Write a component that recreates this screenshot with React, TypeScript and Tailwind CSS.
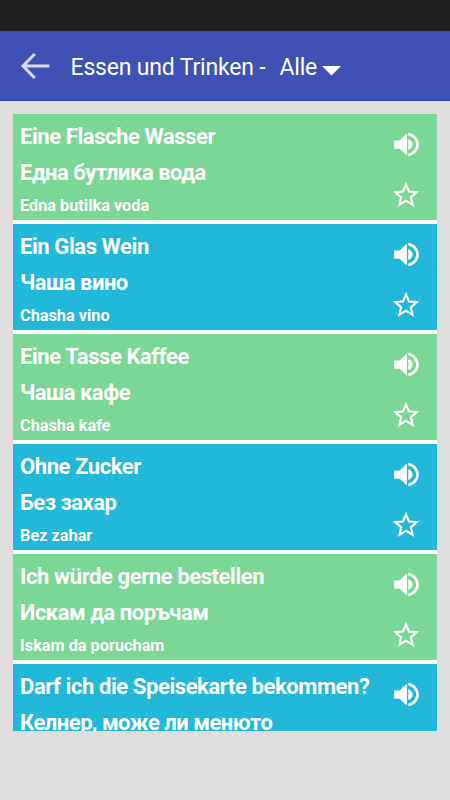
interface Phrase {
  source: string;
  target: string;
  phonetic?: string;
}

const phrases: Phrase[] = [
  { source: "Eine Flasche Wasser", target: "Една бутлика вода", phonetic: "Edna butilka voda" },
  { source: "Ein Glas Wein", target: "Чаша вино", phonetic: "Chasha vino" },
  { source: "Eine Tasse Kaffee", target: "Чаша кафе", phonetic: "Chasha kafe" },
  { source: "Ohne Zucker", target: "Без захар", phonetic: "Bez zahar" },
  { source: "Ich würde gerne bestellen", target: "Искам да поръчам", phonetic: "Iskam da porucham" },
  { source: "Darf ich die Speisekarte bekommen?", target: "Келнер, може ли менюто" },
];

function BackIcon() {
  return (
    <svg className="h-8 w-8" viewBox="0 0 32 32" fill="none" stroke="#d9dcf1" strokeWidth="3">
      <path d="M15.8 4 4 16l11.8 12M4.3 16h26.2" />
    </svg>
  );
}

function SpeakerIcon() {
  return (
    <svg className="h-[33px] w-[33px]" viewBox="0 0 24 24" fill="currentColor">
      <path d="M3 9v6h4l5.3 5V4L7 9H3zm13.5 3c0-1.77-1.4-3.4-3.2-4.03v8.05c1.8-.6 3.2-2.25 3.2-4.02zM13.3 3.4v2.06c3.2.6 5.7 3.37 5.7 6.54s-2.5 5.94-5.7 6.54v2.06c4.4-.7 7.7-4.32 7.7-8.6s-3.3-7.9-7.7-8.6z" />
    </svg>
  );
}

function StarIcon() {
  return (
    <svg className="h-8 w-8" viewBox="0 0 24 24" fill="currentColor">
      <path d="M22 9.24l-7.19-.62L12 2 9.19 8.63 2 9.24l5.46 4.73L5.82 21 12 17.27 18.18 21l-1.63-7.03L22 9.24zM12 15.4l-3.76 2.27 1-4.28-3.32-2.88 4.38-.38L12 6.1l1.71 4.04 4.38.38-3.32 2.88 1 4.28L12 15.4z" />
    </svg>
  );
}

function PhraseCard({ phrase, green }: { phrase: Phrase; green: boolean }) {
  return (
    <div className={`flex h-[106px] shrink-0 text-white ${green ? "bg-[#7ad796]" : "bg-[#22b8da]"}`}>
      <div className="min-w-0 flex-1 whitespace-nowrap pl-[7px] pt-[5px] font-bold">
        <p className="text-[22px] leading-9 tracking-[-0.42px]">{phrase.source}</p>
        <p className="text-[22px] leading-9 tracking-[-0.5px]">{phrase.target}</p>
        {phrase.phonetic && <p className="text-[16.3px] leading-[30px]">{phrase.phonetic}</p>}
      </div>
      <div className="flex w-[62px] shrink-0 flex-col items-center gap-[18px] pt-[14px]">
        <SpeakerIcon />
        <StarIcon />
      </div>
    </div>
  );
}

export default function App() {
  return (
    <div className="flex h-[800px] w-[450px] flex-col overflow-hidden bg-[#dedede] font-['Roboto',sans-serif]">
      {/* Status bar */}
      <div className="h-[31px] shrink-0 bg-[#1f1f1f]" />

      {/* Toolbar */}
      <header className="flex h-[70px] shrink-0 items-center border-b border-[#2c42b4] bg-[#3f51b5] pl-[19px] text-[23px] tracking-[-0.18px] text-white">
        <BackIcon />
        <h1 className="ml-[19.5px] whitespace-pre pt-[6px]">Essen und Trinken -</h1>
        <span className="ml-[14px] pt-[6px]">Alle</span>
        <svg className="ml-[5px] mt-[11px] h-[10px] w-[19px]" viewBox="0 0 19 10" fill="currentColor">
          <path d="M0 0h19L9.5 9.5z" />
        </svg>
      </header>

      {/* Phrase list */}
      <main className="mx-[13px] mt-[13px] flex h-[617px] flex-col gap-1 overflow-hidden bg-white">
        {phrases.map((phrase, i) => (
          <PhraseCard key={phrase.source} phrase={phrase} green={i % 2 === 0} />
        ))}
      </main>
    </div>
  );
}
